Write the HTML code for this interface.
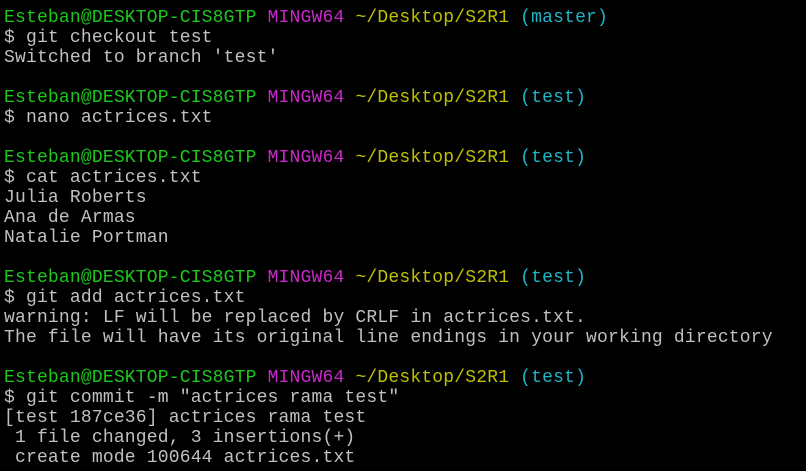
<!DOCTYPE html>
<html><head><meta charset="utf-8"><style>
html,body{margin:0;padding:0;background:#000;width:806px;height:471px;overflow:hidden}
pre{margin:0;padding:8px 0 0 4px;font-family:"Liberation Mono",monospace;font-size:18px;letter-spacing:0.18px;line-height:20px;color:#c0c0c0;white-space:pre}
.g{color:#1cc81c}.m{color:#c828c8}.y{color:#c0c000}.c{color:#1fb5c8}
</style></head><body><pre><span class="g">Esteban@DESKTOP-CIS8GTP</span> <span class="m">MINGW64</span> <span class="y">~/Desktop/S2R1</span> <span class="c">(master)</span>
$ git checkout test
Switched to branch 'test'

<span class="g">Esteban@DESKTOP-CIS8GTP</span> <span class="m">MINGW64</span> <span class="y">~/Desktop/S2R1</span> <span class="c">(test)</span>
$ nano actrices.txt

<span class="g">Esteban@DESKTOP-CIS8GTP</span> <span class="m">MINGW64</span> <span class="y">~/Desktop/S2R1</span> <span class="c">(test)</span>
$ cat actrices.txt
Julia Roberts
Ana de Armas
Natalie Portman

<span class="g">Esteban@DESKTOP-CIS8GTP</span> <span class="m">MINGW64</span> <span class="y">~/Desktop/S2R1</span> <span class="c">(test)</span>
$ git add actrices.txt
warning: LF will be replaced by CRLF in actrices.txt.
The file will have its original line endings in your working directory

<span class="g">Esteban@DESKTOP-CIS8GTP</span> <span class="m">MINGW64</span> <span class="y">~/Desktop/S2R1</span> <span class="c">(test)</span>
$ git commit -m "actrices rama test"
[test 187ce36] actrices rama test
 1 file changed, 3 insertions(+)
 create mode 100644 actrices.txt
</pre></body></html>
